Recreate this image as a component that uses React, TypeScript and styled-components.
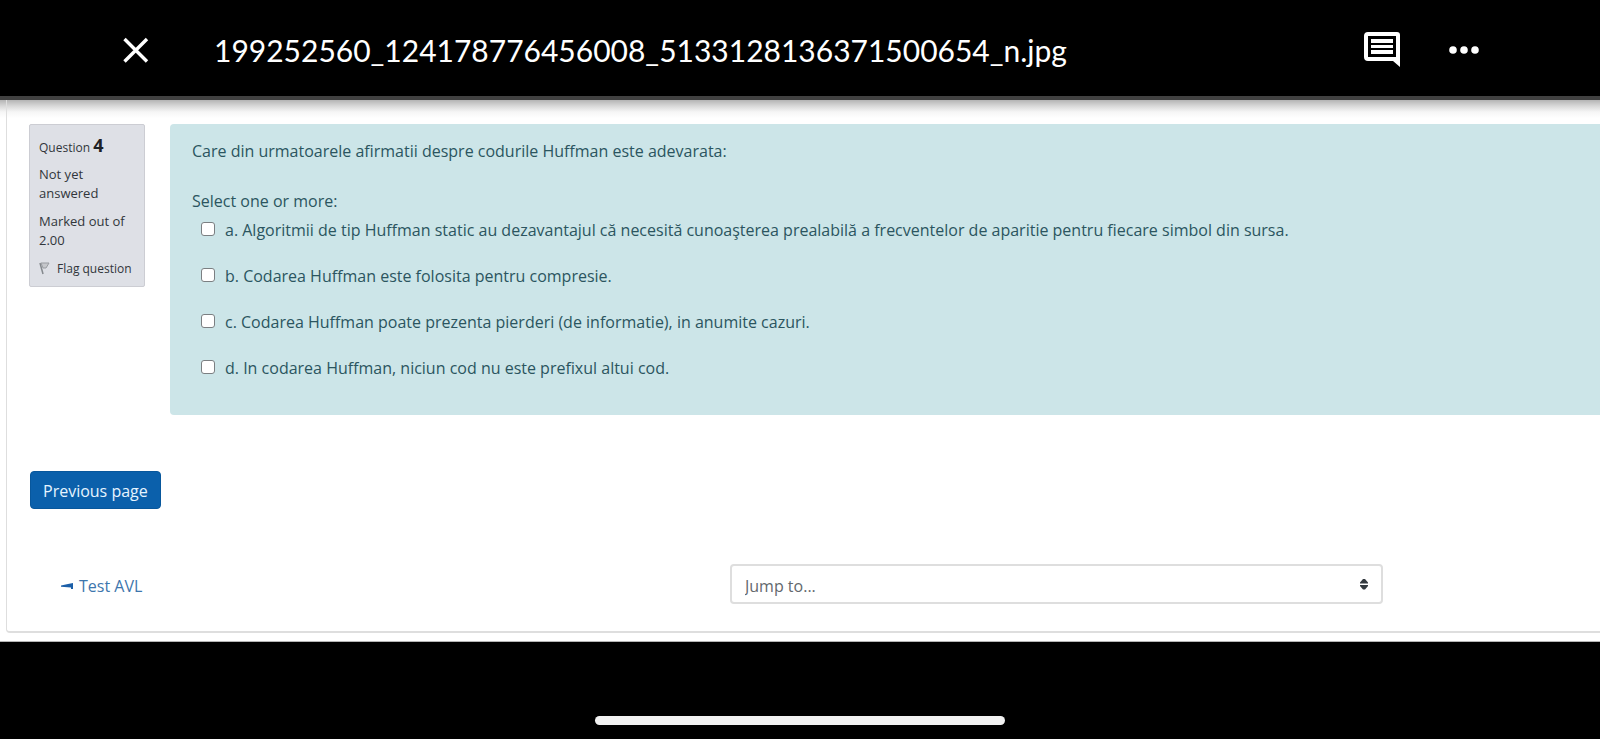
import React from "react";
import styled, { createGlobalStyle } from "styled-components";

const GlobalStyle = createGlobalStyle`
  * { box-sizing: border-box; }
  body { margin: 0; background: #000; }
`;

const Viewer = styled.div`
  min-height: 100vh;
  display: flex;
  flex-direction: column;
  overflow-x: hidden;
  background: #000;
  font-family: "Open Sans", "Noto Sans", sans-serif;
  font-size: 16px;
  line-height: 24px;
`;

const TopBar = styled.header`
  display: flex;
  align-items: center;
  height: 100px;
  padding: 4px 121px 0 122px;
  background: #000;
  border-bottom: 4px solid #414141;
  color: #fff;
`;

const IconButton = styled.button`
  display: flex;
  padding: 0;
  border: 0;
  background: none;
  color: #fff;
`;

const FileName = styled.h1`
  flex: 1;
  margin: 0 0 0 64px;
  font-family: Lato, sans-serif;
  font-size: 30px;
  font-weight: 400;
  line-height: 40px;
`;

const Actions = styled.div`
  display: flex;
  align-items: center;
  gap: 48px;
`;

const Page = styled.main`
  padding: 0 0 8px 6px;
  background: linear-gradient(#b4b4b4, #d8d8d8 6px, #f6f6f6 12px, #fff 18px);
  border-bottom: 1px solid #b5b5b5;
`;

const Panel = styled.div`
  padding: 24px 0 27px 22px;
  border: solid #dedede;
  border-width: 0 0 2px 1px;
  border-bottom-left-radius: 4px;
`;

const Question = styled.section`
  display: flex;
  align-items: flex-start;
  gap: 25px;
`;

const Info = styled.aside`
  flex: none;
  width: 116px;
  padding: 8px 8px 8px 9px;
  border: 1px solid #cccdd3;
  border-radius: 2px;
  background: #dee0e6;
  color: #31363b;
  font-size: 13px;
  line-height: 19px;
`;

const InfoLine = styled.p`
  margin: 0 0 9px;
`;

const InfoTitle = styled.h2`
  margin: 0 0 5px;
  font-size: 12px;
  font-weight: 400;
  line-height: 24px;
`;

const Number = styled.b`
  font-size: 18px;
  color: #1d2125;
`;

const FlagLink = styled.a`
  display: flex;
  align-items: center;
  gap: 7px;
  color: inherit;
  font-size: 12px;
  text-decoration: none;
  white-space: nowrap;
`;

const Formulation = styled.div`
  flex: 1;
  min-width: 0;
  padding: 15px 22px 13px;
  border-radius: 4px 0 0 4px;
  background: #cce5e8;
  color: #2b5560;
`;

const Prompt = styled.p`
  margin: 0;
`;

const Answers = styled.fieldset`
  margin: 26px 0 0;
  padding: 0;
  border: 0;
`;

const Legend = styled.legend`
  padding: 0;
`;

const Option = styled.label`
  display: flex;
  align-items: center;
  gap: 10px;
  margin-bottom: 22px;
  padding-left: 9px;

  ${Legend} + & {
    margin-top: 5px;
  }
`;

const Tick = styled.input`
  appearance: none;
  width: 14px;
  height: 14px;
  margin: 0 0 2px;
  border: 1px solid #7b7f82;
  border-radius: 3px;
  background: #fff;
`;

const PreviousButton = styled.button`
  display: block;
  height: 38px;
  margin: 56px 0 55px 1px;
  padding: 2px 12px 0;
  border: 1px solid #08579c;
  border-radius: 4px;
  background: #0b60ab;
  color: #e6f4ff;
  font: inherit;
  white-space: nowrap;
`;

const Navigation = styled.nav`
  display: grid;
  grid-template-columns: 669px minmax(0, 653px);
  align-items: center;
  padding-left: 32px;
`;

const ActivityLink = styled.a`
  display: flex;
  align-items: center;
  gap: 6px;
  padding-top: 3px;
  color: #3d76ad;
  text-decoration: none;
`;

const JumpField = styled.div`
  display: grid;
  align-items: center;

  > * {
    grid-area: 1 / 1;
  }
`;

const JumpSelect = styled.select`
  appearance: none;
  width: 100%;
  height: 40px;
  padding: 3px 13px 0;
  border: 2px solid #dedede;
  border-radius: 4px;
  background: #fff;
  color: #63686d;
  font: inherit;
`;

const Carets = styled.svg`
  justify-self: end;
  margin-right: 15px;
  pointer-events: none;
`;

const Footer = styled.footer`
  flex: 1;
  display: flex;
  justify-content: center;
  align-items: flex-end;
  padding-bottom: 14px;
`;

const HomeIndicator = styled.div`
  width: 410px;
  height: 9px;
  border-radius: 5px;
  background: #f2f2f2;
`;

const options = [
  "a. Algoritmii de tip Huffman static au dezavantajul că necesită cunoaşterea prealabilă a frecventelor de aparitie pentru fiecare simbol din sursa.",
  "b. Codarea Huffman este folosita pentru compresie.",
  "c. Codarea Huffman poate prezenta pierderi (de informatie), in anumite cazuri.",
  "d. In codarea Huffman, niciun cod nu este prefixul altui cod.",
];

export default function App() {
  return (
    <Viewer>
      <GlobalStyle />
      <TopBar>
        <IconButton aria-label="Close">
          <svg width="28" height="28" viewBox="0 0 28 28" fill="none" stroke="currentColor" strokeWidth="3.4">
            <path d="M2.5 3 25 25.5M25 3 2.5 25.5" />
          </svg>
        </IconButton>
        <FileName>199252560_124178776456008_5133128136371500654_n.jpg</FileName>
        <Actions>
          <IconButton aria-label="Comments">
            <svg width="38" height="36" viewBox="0 0 38 36" fill="currentColor">
              <path
                fillRule="evenodd"
                d="M5 0H34Q37 0 37 3V35L30 29H5Q1 29 1 25V4Q1 0 5 0ZM5 4V25H33V4Z"
              />
              <path d="M8 7H30V11H8ZM8 13H30V16H8ZM8 18H30V22H8Z" />
            </svg>
          </IconButton>
          <IconButton aria-label="More options">
            <svg width="30" height="8" viewBox="0 0 30 8" fill="currentColor">
              <circle cx="4" cy="4" r="3.8" />
              <circle cx="15" cy="4" r="3.8" />
              <circle cx="26" cy="4" r="3.8" />
            </svg>
          </IconButton>
        </Actions>
      </TopBar>
      <Page>
        <Panel>
          <Question>
            <Info>
              <InfoTitle>
                Question <Number>4</Number>
              </InfoTitle>
              <InfoLine>Not yet answered</InfoLine>
              <InfoLine>Marked out of 2.00</InfoLine>
              <FlagLink href="#flag">
                <svg width="11" height="13" viewBox="0 0 11 13" fill="none">
                  <path d="M1 1 4 12" stroke="#85898e" strokeWidth="1.5" />
                  <path d="M2 1H10L7 6H4Z" fill="#c6c8cc" stroke="#999ca1" />
                </svg>
                Flag question
              </FlagLink>
            </Info>
            <Formulation>
              <Prompt>Care din urmatoarele afirmatii despre codurile Huffman este adevarata:</Prompt>
              <Answers>
                <Legend>Select one or more:</Legend>
                {options.map((text) => (
                  <Option key={text}>
                    <Tick type="checkbox" />
                    {text}
                  </Option>
                ))}
              </Answers>
            </Formulation>
          </Question>
          <PreviousButton>Previous page</PreviousButton>
          <Navigation>
            <ActivityLink href="#previous">
              <svg width="12" height="6" viewBox="0 0 12 6" fill="#1c5fa8">
                <path d="M0 2.5 7 1 12 0V6H10V4.5L0 3.8Z" />
              </svg>
              Test AVL
            </ActivityLink>
            <JumpField>
              <JumpSelect aria-label="Jump to activity">
                <option>Jump to...</option>
              </JumpSelect>
              <Carets width="8" height="12" viewBox="0 0 8 12" fill="#343a40">
                <path d="M0 5.5V4.5L3 1H5L8 4.5V5.5ZM0 7H8V8L5 11.5H3L0 8Z" />
              </Carets>
            </JumpField>
          </Navigation>
        </Panel>
      </Page>
      <Footer>
        <HomeIndicator />
      </Footer>
    </Viewer>
  );
}
